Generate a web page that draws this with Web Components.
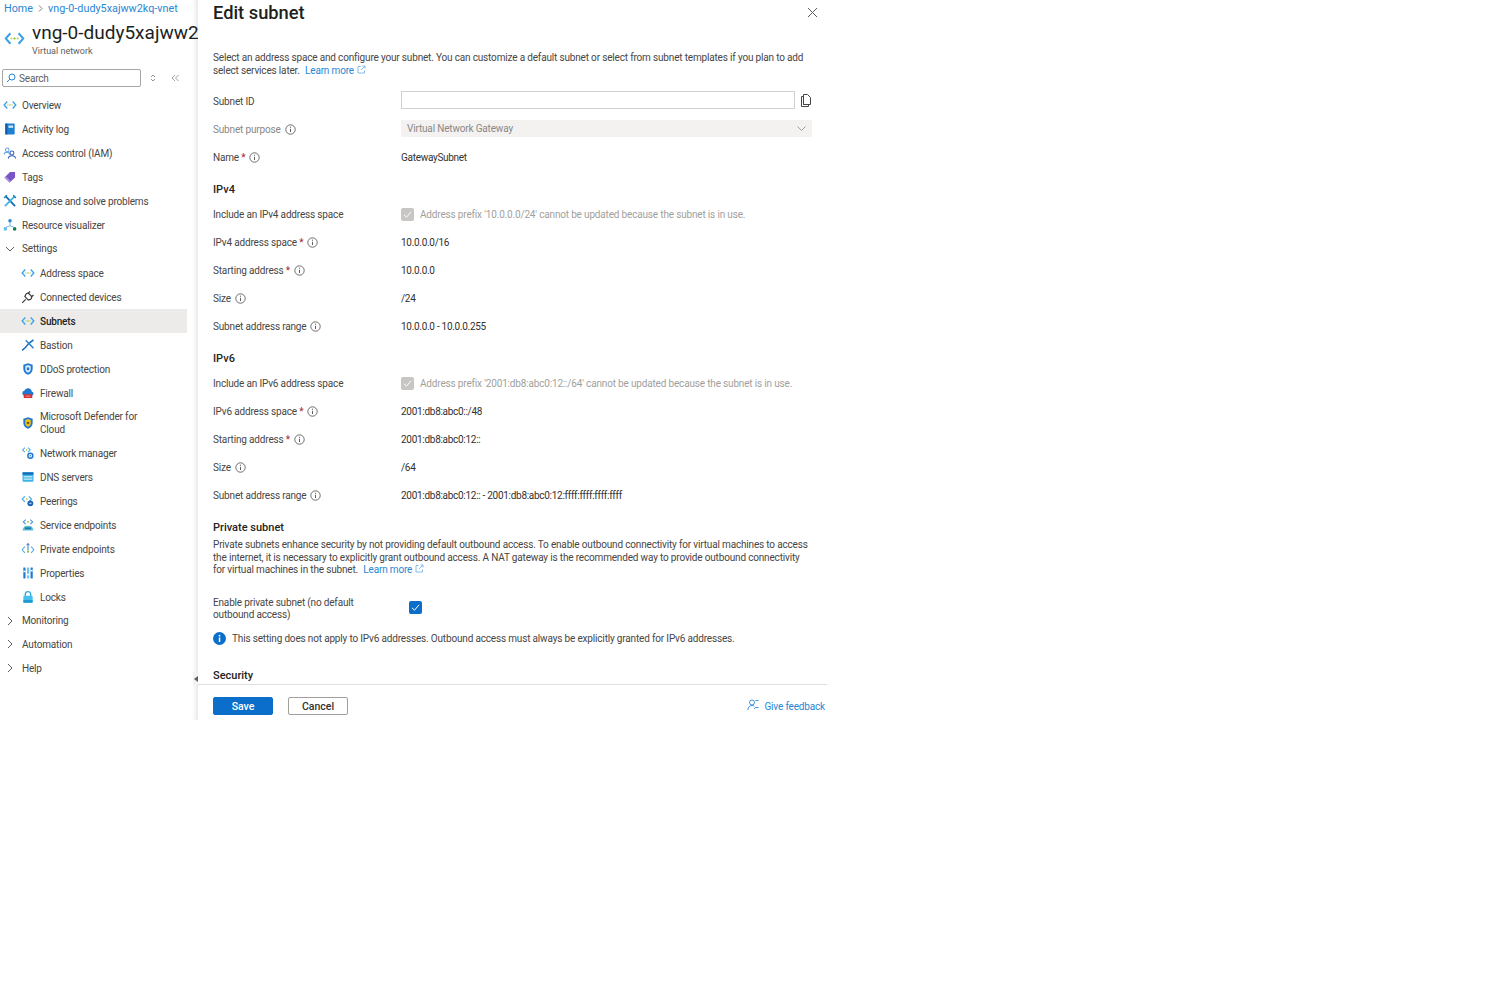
<!DOCTYPE html>
<html lang="en">
<head>
<meta charset="utf-8">
<title>Edit subnet</title>
<style>
  html,body{margin:0;background:#fff}
  body{font:10px/13px Roboto,"Open Sans",Arial,sans-serif;letter-spacing:-.17px;color:#323130}
</style>
</head>
<body>
<az-blade>
  <az-sidebar slot="side"></az-sidebar>
  <az-panel slot="main"></az-panel>
</az-blade>
<script>
const ICONS={
  vnet:'<path d="M5.500 4.500 1.500 9l4 4.500M12.500 4.500l4 4.500-4 4.500" fill="none" stroke="#3aa0e8" stroke-width="1.700"/><circle cx="6.300" cy="9" r=".9" fill="#b0d870"/><circle cx="9" cy="9" r=".9" fill="#7fba00"/><circle cx="11.700" cy="9" r=".9" fill="#b0d870"/>',
  log:'<rect x="3" y="2" width="12" height="14" rx="1" fill="#1f7fd0"/><rect x="3" y="2" width="2.500" height="14" fill="#0f5ca8"/><rect x="7" y="4.500" width="6" height="3" fill="#cfe8fb"/>',
  iam:'<circle cx="5.500" cy="5" r="2.300" fill="none" stroke="#5ea0ef" stroke-width="1.300"/><path d="M1.500 11c0-4 7-4 7 0" fill="none" stroke="#5ea0ef" stroke-width="1.300"/><circle cx="11.500" cy="9" r="2.500" fill="none" stroke="#2c5fb8" stroke-width="1.300"/><path d="M7 16c0-4.500 9-4.500 9 0" fill="none" stroke="#2c5fb8" stroke-width="1.300"/>',
  tag:'<path d="M2 9.500 9 2.500h6.500v7l-7 6.500z" fill="#7a55c8"/><path d="M2 9.500 8.500 16l1.500-1.500-6.500-6.500z" fill="#a98be4"/>',
  diag:'<path d="M3 2.500 15.500 15.500" stroke="#0f6cbd" stroke-width="2.200"/><path d="M15.500 2.500 2.500 15.500" stroke="#3ab0e0" stroke-width="2.200"/><path d="M1.500 5 5 1.500M13 1.500 16.500 5" stroke="#1c7fc4" stroke-width="1.800"/>',
  viz:'<circle cx="9" cy="3.500" r="2.300" fill="#2b88d8"/><circle cx="3" cy="14" r="2.300" fill="#5ec0e8"/><circle cx="15" cy="14" r="2.300" fill="#107c41"/><path d="M9 5v5M3.500 12 9 10l5.500 2" fill="none" stroke="#59a6dc" stroke-width="1"/>',
  plug:'<path d="M1.500 16.500l4.500-4.500M11.500 2 8.500 5M16 6.500 13 9.500M5 8.500l4.500 4.500 2.500-1c2-1 2-3 1-4.500l-2.500-2.500C9 3.500 7 4 6 6z" fill="none" stroke="#3b3a39" stroke-width="1.600"/>',
  bastion:'<path d="M1.500 16C6 12.500 8 9.500 9.500 7.500L16 2.500" fill="none" stroke="#0f6cbd" stroke-width="1.900"/><path d="M6 3 16 13" stroke="#2b88d8" stroke-width="1.900"/>',
  shield:'<path d="M9 1.500 15 3.500v5.500c0 4-3 6.500-6 7.500-3-1-6-3.500-6-7.500V3.500z" fill="#1f78d1"/><path d="M9 4 12.500 5.200v4c0 2.300-1.700 3.800-3.500 4.500-1.800-.7-3.500-2.200-3.500-4.500v-4z" fill="#d6ecfb"/><rect x="7.500" y="7" width="3" height="3.500" fill="#1f78d1"/>',
  fire:'<path d="M4.500 12.500a3.200 3.200 0 0 1-.3-6.300 5 5 0 0 1 9.600.8 2.800 2.800 0 0 1 0 5.500z" fill="#1f78d1"/><rect x="3.500" y="10.500" width="11" height="5" fill="#d13438"/><path d="M6 13h6" stroke="#f8a8a8"/>',
  defender:'<path d="M9 1.500 15 3.500v5.500c0 4-3 6.500-6 7.500-3-1-6-3.500-6-7.500V3.500z" fill="#1f78d1"/><path d="M9 4 12.500 5.200v4c0 2.300-1.700 3.800-3.500 4.500-1.800-.7-3.500-2.200-3.500-4.500v-4z" fill="#f5c518"/><rect x="7.500" y="7.500" width="3" height="3" fill="#7a5c00"/>',
  netmgr:'<path d="M5 2 2 5l3 3M9 2l3 3-3 3" fill="none" stroke="#4aa8e8" stroke-width="1.300"/><circle cx="7" cy="5" r=".8" fill="#7fba00"/><circle cx="12" cy="12.500" r="3.200" fill="none" stroke="#1f78d1" stroke-width="1.900"/><circle cx="12" cy="12.500" r="1" fill="#1f78d1"/>',
  dns:'<rect x="2" y="3" width="14" height="12" rx="1" fill="#3fb3e8"/><rect x="2" y="3" width="14" height="3" fill="#0f6cbd"/><rect x="3.500" y="8" width="11" height="1.500" fill="#d6f0fc"/><rect x="3.500" y="11" width="11" height="1.500" fill="#d6f0fc"/>',
  peer:'<path d="M5 3 1.500 6.500 5 10M10 3l3.500 3.500L10 10" fill="none" stroke="#4aa8e8" stroke-width="1.500"/><circle cx="7.500" cy="6.500" r="1" fill="#7fba00"/><circle cx="12" cy="12" r="3.800" fill="#1f66b8"/><path d="M10.500 12h3" stroke="#fff"/>',
  svc:'<path d="M6 2 3 5l3 3M12 2l3 3-3 3" fill="none" stroke="#3f8fd8" stroke-width="1.300"/><circle cx="9" cy="5" r="1" fill="#7fba00"/><path d="M2 16c1-5 3-6 7-6s6 1 7 6z" fill="#5cc0d8"/><rect x="5" y="12" width="8" height="2.500" fill="#1f78a8"/>',
  pep:'<path d="M5 6 1.500 10 5 14M13 6l3.500 4L13 14" fill="none" stroke="#4aa8e8" stroke-width="1.300"/><path d="M9 2v9" stroke="#2b6cb8" stroke-width="1.200"/><path d="M7.300 4 9 2l1.700 2" fill="none" stroke="#2b6cb8" stroke-width="1.200"/><circle cx="9" cy="12.500" r="1.200" fill="#7fba00"/>',
  props:'<rect x="3" y="2" width="2.800" height="14" fill="#1f78d1"/><rect x="7.700" y="2" width="2.800" height="14" fill="#6cc4f0"/><rect x="12.300" y="2" width="2.800" height="14" fill="#1f78d1"/><rect x="3" y="6" width="2.800" height="2" fill="#fff"/><rect x="7.700" y="10" width="2.800" height="2" fill="#fff"/><rect x="12.300" y="5" width="2.800" height="2" fill="#fff"/>',
  lock:'<path d="M5.500 8V5.500a3.500 3.500 0 0 1 7 0V8" fill="none" stroke="#29a8e0" stroke-width="1.700"/><rect x="3" y="7.500" width="12" height="9" rx="1.500" fill="#45c0ee"/><rect x="3" y="13" width="12" height="3.500" rx="1" fill="#1f9bd0"/>'
};

class AzIcon extends HTMLElement{
  constructor(){
    super();
    const s=this.attachShadow({mode:'open'});
    s.innerHTML=`<style>:host{display:inline-flex;flex:none;width:var(--sz,14px);height:var(--sz,14px)}svg{width:100%;height:100%;display:block}</style>
      <svg viewBox="0 0 18 18">${ICONS[this.getAttribute('name')]||''}</svg>`;
  }
}
customElements.define('az-icon',AzIcon);

class AzInfo extends HTMLElement{
  constructor(){
    super();
    this.attachShadow({mode:'open'}).innerHTML=`<style>:host{display:inline-flex;width:11px;height:11px;margin-left:4px;vertical-align:-2px}svg{width:11px;height:11px}</style>
      <svg viewBox="0 0 11 11"><circle cx="5.500" cy="5.500" r="4.700" fill="none" stroke="#605e5c" stroke-width=".9"/><path d="M5.500 4.800v3.200" stroke="#605e5c"/><circle cx="5.500" cy="3.200" r=".6" fill="#605e5c"/></svg>`;
  }
}
customElements.define('az-info',AzInfo);

class AzLearn extends HTMLElement{
  constructor(){
    super();
    this.attachShadow({mode:'open'}).innerHTML=`<style>:host{display:inline;color:#2a86d3;margin-left:3px}svg{width:9px;height:9px;margin-left:3px}</style>
      Learn more<svg viewBox="0 0 9 9"><path d="M3.500 1.500H1v6.500h6.500V5.500" fill="none" stroke="#6aa9dd" stroke-width=".8"/><path d="M4 5l4-4M5.500 1H8v2.500" fill="none" stroke="#6aa9dd" stroke-width=".8"/></svg>`;
  }
}
customElements.define('az-learn',AzLearn);

class AzNavItem extends HTMLElement{
  constructor(){
    super();
    const icon=this.getAttribute('icon'),arrow=this.getAttribute('arrow');
    const lead=arrow
      ?`<svg class="ar" viewBox="0 0 10 10"><path d="${arrow==='down'?'M1 3l4 4 4-4':'M3 1l4 4-4 4'}" fill="none" stroke="#605e5c"/></svg>`
      :`<az-icon name="${icon}"></az-icon>`;
    this.attachShadow({mode:'open'}).innerHTML=`<style>
      :host{display:flex;align-items:center;gap:5px;min-height:24px;padding-left:3px;width:184px;color:#484644}
      :host([sub]){padding-left:21px;width:166px}
      :host([active]){background:#edebe9;color:#201f1e;font-weight:500}
      :host([tall]){min-height:36px}
      :host([short]){min-height:23px}
      .ar{width:10px;height:10px;margin:0 2px 0 2px;flex:none}
      .t{max-width:110px}
      :host(:not([tall])) .t{max-width:none}
      az-icon{--sz:14px}
    </style>${lead}<span class="t"><slot></slot></span>`;
  }
}
customElements.define('az-nav-item',AzNavItem);

class AzSidebar extends HTMLElement{
  constructor(){
    super();
    const top=[['vnet','Overview'],['log','Activity log'],['iam','Access control (IAM)'],['tag','Tags'],['diag','Diagnose and solve problems'],['viz','Resource visualizer']];
    const sub=[['vnet','Address space'],['plug','Connected devices'],['vnet','Subnets',1],['bastion','Bastion'],['shield','DDoS protection'],['fire','Firewall'],['defender','Microsoft Defender for Cloud',0,1],['netmgr','Network manager'],['dns','DNS servers'],['peer','Peerings'],['svc','Service endpoints'],['pep','Private endpoints'],['props','Properties'],['lock','Locks']];
    const item=(i,t,a,tall,extra='')=>`<az-nav-item icon="${i}" ${extra} ${a?'active':''} ${tall?'tall':''}>${t}</az-nav-item>`;
    this.attachShadow({mode:'open'}).innerHTML=`<style>
      :host{display:block;width:198px;height:720px;flex:none;position:relative;overflow:hidden;box-shadow:inset -6px 0 5px -4px #e4e4e4}
      .crumb{display:flex;align-items:center;height:16px;padding-left:4px;color:#2a86d3;gap:4px;font-size:10.800px;letter-spacing:0}
      .crumb svg{width:7px;height:7px}
      .head{display:flex;gap:7px;padding-left:4px;height:45px;margin-top:6px}
      .head az-icon{--sz:21px;margin-top:6px}
      h1{margin:0;font:400 19px/22px Roboto,"Open Sans",Arial,sans-serif;letter-spacing:0;color:#201f1e;white-space:nowrap}
      .sub{font-size:9px;line-height:12px;letter-spacing:0;color:#605e5c;margin-top:1px}
      .tools{display:flex;align-items:center;height:18px;margin:2px 0 6px 2px}
      .search{width:139px;height:18px;box-sizing:border-box;border:1px solid #a6a6a6;border-radius:2px;display:flex;align-items:center;gap:3px;padding-left:3px;color:#605e5c}
      .search svg{width:10px;height:10px}
      .t1{width:8px;height:8px;margin-left:8px}.t2{width:8px;height:8px;margin-left:14px}
      nav{display:flex;flex-direction:column}
      .grip{position:absolute;left:193px;top:672px;width:5px;height:13px;background:#f3f2f1;display:flex;align-items:center;justify-content:center}
      .grip i{border:3px solid transparent;border-right:4px solid #605e5c;border-left:0}
    </style>
    <div class="crumb"><span>Home</span><svg viewBox="0 0 7 7"><path d="M2 .5l3 3-3 3" fill="none" stroke="#605e5c" stroke-width=".8"/></svg><span>vng-0-dudy5xajww2kq-vnet</span></div>
    <div class="head"><az-icon name="vnet"></az-icon><div><h1>vng-0-dudy5xajww2</h1><div class="sub">Virtual network</div></div></div>
    <div class="tools"><div class="search"><svg viewBox="0 0 10 10"><circle cx="6" cy="4" r="3" fill="none" stroke="#2a86d3"/><path d="M3.800 6.200 1 9" stroke="#2a86d3"/></svg>Search</div>
      <svg class="t1" viewBox="0 0 8 8"><path d="M2 3l2-2 2 2M2 5l2 2 2-2" fill="none" stroke="#8a8886" stroke-width=".9"/></svg>
      <svg class="t2" viewBox="0 0 8 8"><path d="M4 1 1 4l3 3M7.500 1l-3 3 3 3" fill="none" stroke="#8a8886" stroke-width=".8"/></svg></div>
    <nav>
      ${top.map(([i,t])=>item(i,t)).join('')}
      <az-nav-item arrow="down" short style="margin-bottom:1px">Settings</az-nav-item>
      ${sub.map(([i,t,a,tall])=>item(i,t,a,tall,'sub')).join('')}
      <az-nav-item arrow="right" short>Monitoring</az-nav-item>
      <az-nav-item arrow="right">Automation</az-nav-item>
      <az-nav-item arrow="right">Help</az-nav-item>
    </nav>
    <div class="grip"><i></i></div>`;
  }
}
customElements.define('az-sidebar',AzSidebar);

class AzRow extends HTMLElement{
  constructor(){
    super();
    this.attachShadow({mode:'open'}).innerHTML=`<style>
      :host{display:grid;grid-template-columns:188px 1fr;align-items:center;height:28px}
      :host([muted]) .l{color:#8a8886}
      .l{color:#484644}
      .v{color:#323130;display:flex;align-items:center}
    </style><div class="l"><slot name="label"></slot></div><div class="v"><slot></slot></div>`;
  }
}
customElements.define('az-row',AzRow);

class AzCheck extends HTMLElement{
  constructor(){
    super();
    const on=this.hasAttribute('primary');
    this.attachShadow({mode:'open'}).innerHTML=`<style>
      :host{display:inline-flex;width:13px;height:13px;border-radius:2px;background:${on?'#0b6ecb':'#c8c6c4'};align-items:center;justify-content:center;flex:none}
      svg{width:9px;height:9px}
    </style><svg viewBox="0 0 9 9"><path d="M1 4.800 3.500 7.200 8 1.800" fill="none" stroke="#fff"/></svg>`;
  }
}
customElements.define('az-check',AzCheck);

class AzPanel extends HTMLElement{
  constructor(){
    super();
    const row=(label,val,info=1)=>`<az-row><span slot="label">${label}${info?'<az-info></az-info>':''}</span><span style="letter-spacing:-.29px">${val}</span></az-row>`;
    const dis=(t)=>`<az-row><span slot="label">${t[0]}</span><az-check></az-check><span style="color:#a19f9d;margin-left:6px;white-space:nowrap">${t[1]}</span></az-row>`;
    const req='<span style="color:#a4262c"> *</span>';
    this.attachShadow({mode:'open'}).innerHTML=`<style>
      :host{display:flex;flex-direction:column;width:629px;height:720px;overflow:hidden}
      .body{flex:1;padding:0 16px 0 15px;overflow:hidden;min-height:0}
      header{display:flex;justify-content:space-between;align-items:flex-start;height:52px}
      h2{margin:0;font:500 18.300px/25px Roboto,"Open Sans",Arial,sans-serif;letter-spacing:0;color:#201f1e}
      header svg{width:11px;height:11px;margin:7px -7px 0 0}
      p{margin:0}
      .intro{height:35px;color:#484644;line-height:12.500px;white-space:nowrap}
      .input{width:392px;height:16px;border:1px solid #d2d0ce;background:#fff;margin-top:-2px}
      .copy{width:12px;height:13px;margin:-2px 0 0 5px}
      .select{width:411px;height:17px;background:#f3f2f1;color:#8a8886;display:flex;align-items:center;justify-content:space-between;padding:0 6px;box-sizing:border-box;margin-top:-2px}
      .select svg{width:9px;height:9px}
      h3{margin:0;font:500 11px/13px Roboto,"Open Sans",Arial,sans-serif;letter-spacing:0;color:#252423}
      .sec{padding:12px 0 4px}
      .sec2{padding:12px 0 5px}
      .para{line-height:12.500px;color:#484644;white-space:nowrap}
      .en{display:grid;grid-template-columns:196px 1fr;align-items:center;margin-top:20px;color:#484644;line-height:12.500px}
      .en az-check{margin-top:-3px}
      .note{display:flex;align-items:center;gap:6px;margin-top:10px;color:#484644}
      .note svg{width:13px;height:13px}
      footer{height:23px;border-top:1px solid #e1dfdd;display:flex;align-items:flex-start;padding:12px 2px 0 15px;flex:none;width:612px}
      button{font:500 10.500px Roboto,"Open Sans",Arial,sans-serif;width:60px;height:18px;border-radius:2px;padding:0;box-sizing:border-box}
      .save{background:#0b6ecb;color:#fff;border:1px solid #0b6ecb}
      .cancel{background:#fff;color:#323130;border:1px solid #a19f9d;margin-left:15px}
      .fb{margin-left:auto;color:#2a86d3;display:flex;align-items:center;gap:5px;height:18px}
      .fb svg{width:12px;height:12px;margin-top:-3px}
    </style>
    <div class="body">
      <header><h2>Edit subnet</h2><svg viewBox="0 0 11 11"><path d="M1 1l9 9M10 1l-9 9" stroke="#605e5c"/></svg></header>
      <p class="intro">Select an address space and configure your subnet. You can customize a default subnet or select from subnet templates if you plan to add<br>select services later. <az-learn></az-learn></p>
      <az-row><span slot="label">Subnet ID</span><div class="input"></div><svg class="copy" viewBox="0 0 12 13"><path d="M1.500 2.500h2v8h5v2h-7zM3.500.5h4l3 3v7h-7z" fill="#fff" stroke="#484644"/></svg></az-row>
      <az-row muted><span slot="label">Subnet purpose<az-info></az-info></span><div class="select">Virtual Network Gateway<svg viewBox="0 0 9 9"><path d="M.5 2.500 4.500 6.500 8.500 2.500" fill="none" stroke="#8a8886" stroke-width=".8"/></svg></div></az-row>
      ${row('Name'+req,'GatewaySubnet')}
      <div class="sec"><h3>IPv4</h3></div>
      ${dis(['Include an IPv4 address space',"Address prefix '10.0.0.0/24' cannot be updated because the subnet is in use."])}
      ${row('IPv4 address space'+req,'10.0.0.0/16')}
      ${row('Starting address'+req,'10.0.0.0')}
      ${row('Size','/24')}
      ${row('Subnet address range','10.0.0.0 - 10.0.0.255')}
      <div class="sec"><h3>IPv6</h3></div>
      ${dis(['Include an IPv6 address space',"Address prefix '2001:db8:abc0:12::/64' cannot be updated because the subnet is in use."])}
      ${row('IPv6 address space'+req,'2001:db8:abc0::/48')}
      ${row('Starting address'+req,'2001:db8:abc0:12::')}
      ${row('Size','/64')}
      ${row('Subnet address range','2001:db8:abc0:12:: - 2001:db8:abc0:12:ffff:ffff:ffff:ffff')}
      <div class="sec2"><h3>Private subnet</h3></div>
      <p class="para">Private subnets enhance security by not providing default outbound access. To enable outbound connectivity for virtual machines to access<br>the internet, it is necessary to explicitly grant outbound access. A NAT gateway is the recommended way to provide outbound connectivity<br>for virtual machines in the subnet. <az-learn></az-learn></p>
      <div class="en"><span>Enable private subnet (no default<br>outbound access)</span><az-check primary></az-check></div>
      <div class="note"><svg viewBox="0 0 13 13"><circle cx="6.500" cy="6.500" r="6.500" fill="#0b6ecb"/><rect x="5.800" y="5.500" width="1.500" height="4.500" fill="#fff"/><circle cx="6.500" cy="3.700" r=".9" fill="#fff"/></svg>This setting does not apply to IPv6 addresses. Outbound access must always be explicitly granted for IPv6 addresses.</div>
      <div style="padding-top:24px"><h3>Security</h3></div>
    </div>
    <footer><button class="save">Save</button><button class="cancel">Cancel</button>
      <span class="fb"><svg viewBox="0 0 12 12"><circle cx="5" cy="3.500" r="2.500" fill="none" stroke="#2a86d3" stroke-width=".9"/><path d="M.8 11c.3-3 2-4.500 4.200-4.500 1 0 1.800.3 2.400.8M7 10l1.500-1.500h3M11.500 1.500h-3" fill="none" stroke="#2a86d3" stroke-width=".9"/></svg>Give feedback</span></footer>`;
  }
}
customElements.define('az-panel',AzPanel);

class AzBlade extends HTMLElement{
  constructor(){
    super();
    this.attachShadow({mode:'open'}).innerHTML=`<style>:host{display:flex;width:1497px;height:998px;align-items:flex-start}</style><slot name="side"></slot><slot name="main"></slot>`;
  }
}
customElements.define('az-blade',AzBlade);
</script>
</body>
</html>
